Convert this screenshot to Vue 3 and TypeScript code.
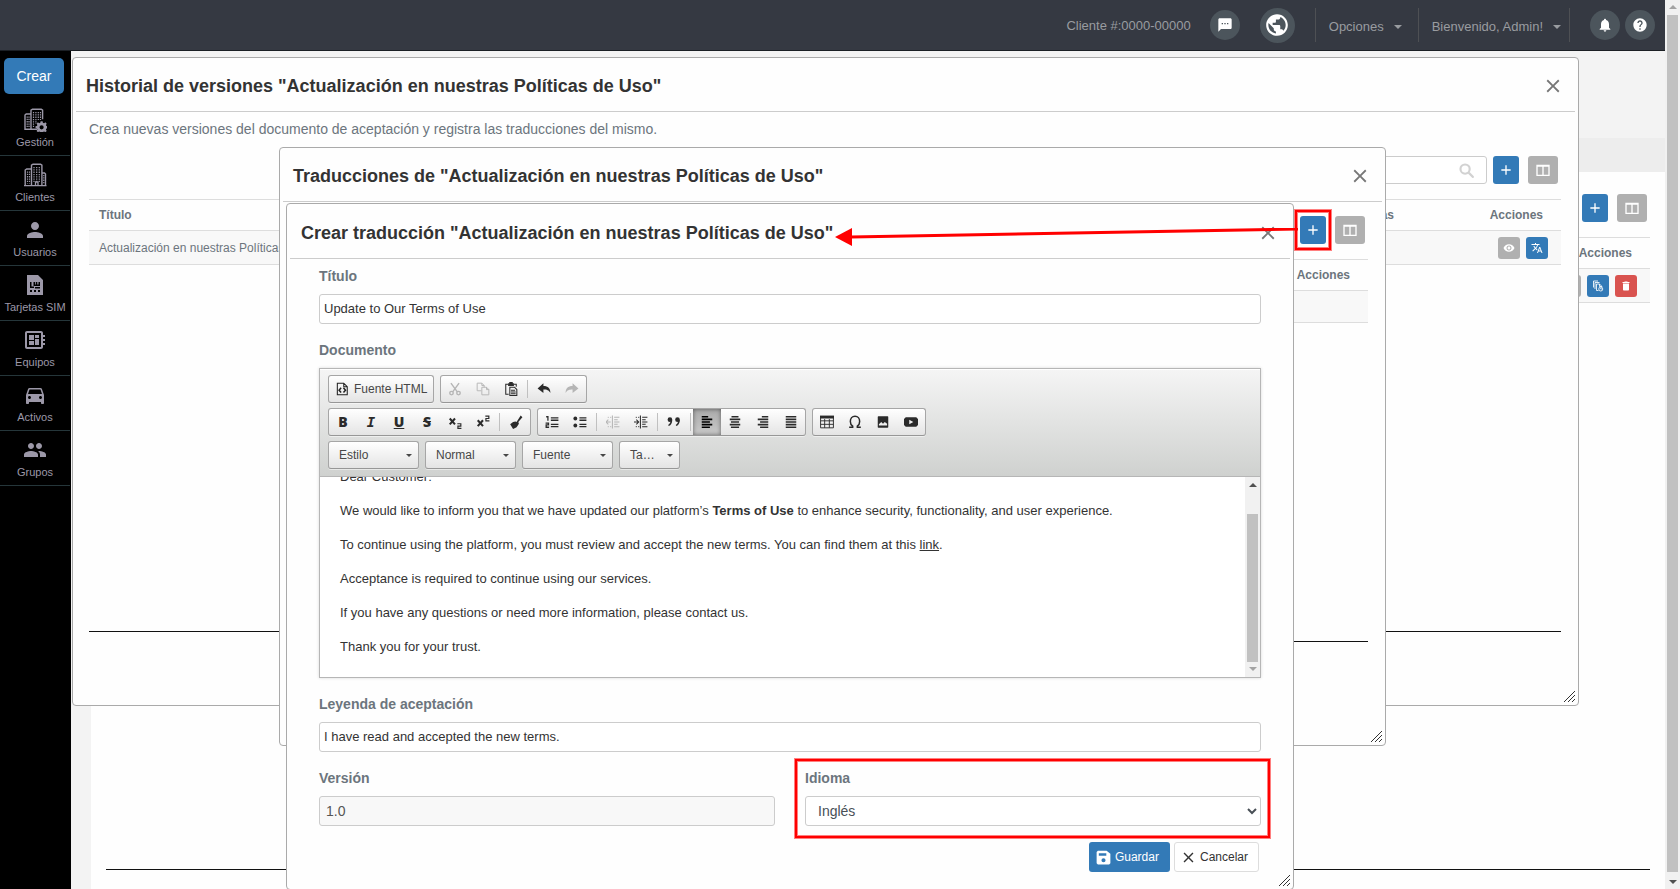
<script setup lang="ts">
import { h, ref, type FunctionalComponent } from 'vue'

interface MenuEntry {
  label: string
  icon: string
}

interface ToolButton {
  label: string
  icon: string
  disabled?: boolean
  active?: boolean
  separated?: boolean
}

const shapes: Record<string, string> = {
  person: '<path d="M12 12c2.21 0 4-1.79 4-4s-1.79-4-4-4-4 1.79-4 4 1.79 4 4 4zm0 2c-2.67 0-8 1.34-8 4v2h16v-2c0-2.66-5.33-4-8-4z"/>',
  people: '<path d="M16 11c1.66 0 2.99-1.34 2.99-3S17.66 5 16 5c-1.66 0-3 1.34-3 3s1.34 3 3 3zm-8 0c1.66 0 2.99-1.34 2.99-3S9.66 5 8 5C6.34 5 5 6.34 5 8s1.34 3 3 3zm0 2c-2.33 0-7 1.17-7 3.5V19h14v-2.5c0-2.33-4.67-3.5-7-3.5zm8 0c-.29 0-.62.02-.97.05 1.16.84 1.97 1.97 1.97 3.45V19h6v-2.5c0-2.33-4.67-3.5-7-3.5z"/>',
  car: '<path d="M18.92 6.01C18.72 5.42 18.16 5 17.5 5h-11c-.66 0-1.21.42-1.42 1.01L3 12v8c0 .55.45 1 1 1h1c.55 0 1-.45 1-1v-1h12v1c0 .55.45 1 1 1h1c.55 0 1-.45 1-1v-8l-2.08-5.99zM6.5 16c-.83 0-1.5-.67-1.5-1.5S5.67 13 6.5 13s1.5.67 1.5 1.5S7.33 16 6.5 16zm11 0c-.83 0-1.5-.67-1.5-1.5s.67-1.5 1.5-1.5 1.5.67 1.5 1.5-.67 1.5-1.5 1.5zM5 11l1.5-4.5h11L19 11H5z"/>',
  board: '<path fill-rule="evenodd" d="M22 9V7h-2V5c0-1.1-.9-2-2-2H4c-1.1 0-2 .9-2 2v14c0 1.1.9 2 2 2h14c1.1 0 2-.9 2-2v-2h2v-2h-2v-2h2v-2h-2V9h2zm-4 10H4V5h14v14z"/><path d="M6 13h5v4H6zM12 7h4v3h-4zM6 7h5v5H6zM12 11h4v6h-4z"/>',
  sim: '<path fill-rule="evenodd" d="M4 2h11l5 5v15H4zM7 9v6h4v-1.500H8.500V9zM10.500 9v4h6.500V9h-1.500v2.500h-1.200V9h-1.500v2.500h-.8V9zM12 14v1.500h5V14zM7 17v2h2v-2zM11 17v2h2v-2zM15 17v2h2v-2z"/>',
  buildingsGear: '<g fill="none" stroke="currentColor"><path stroke-width="1.400" d="M8 21.300V2.200l1.500-1h8.700l1.400 1v9M8 6H3.200L2 7v14.300h12"/><path stroke-width="1.200" stroke-dasharray="1.300 1" d="M10.500 4v15M12.900 4v12M15.300 4v8M17.500 4v8M4.200 8.500v11M6 8.500v11"/></g><path fill-rule="evenodd" d="M17.600 13.200h2l.3 1.500 1.200.5 1.300-.9 1.300 1.400-.8 1.300.5 1 1.500.3v2l-1.500.3-.5 1 .8 1.300-1.300 1.300-1.300-.8-1.200.5-.3 1.300h-2l-.3-1.300-1.100-.5-1.300.8-1.300-1.300.8-1.300-.5-1-1.400-.3v-2l1.400-.3.5-1-.8-1.300 1.300-1.400 1.300.9 1.100-.5zM18.600 17.200a2.100 2.100 0 100 4.200 2.100 2.100 0 000-4.200z"/>',
  buildings: '<g fill="none" stroke="currentColor"><path stroke-width="1.400" d="M8.500 22.300V2.200l1.500-1h7.500l1.400 1v20.100M8.500 6H3.700L2.200 7v15.300M19 10h2.500l1 1v11.300M1 22.600h22.500"/><path stroke-width="1.200" stroke-dasharray="1.300 1" d="M11 4v15M13.700 4v15M16.300 4v15M4.500 8.500v12M6.500 8.500v12M20.800 12v9"/><path stroke-width="1.300" d="M12.500 22v-3h2.500v3"/></g>',
  chat: '<path fill-rule="evenodd" d="M20 2H4c-1.100 0-1.990.9-1.990 2L2 22l4-4h14c1.100 0 2-.9 2-2V4c0-1.100-.9-2-2-2zM9 11H7V9h2v2zm4 0h-2V9h2v2zm4 0h-2V9h2v2z"/>',
  globe: '<path d="M12 2C6.480 2 2 6.480 2 12s4.480 10 10 10 10-4.480 10-10S17.520 2 12 2zm-1 17.930c-3.950-.49-7-3.850-7-7.930 0-.62.08-1.210.21-1.790L9 15v1c0 1.100.9 2 2 2v1.930zm6.900-2.540c-.26-.81-1-1.390-1.900-1.390h-1v-3c0-.55-.45-1-1-1H8v-2h2c.55 0 1-.45 1-1V7h2c1.100 0 2-.9 2-2v-.41c2.930 1.190 5 4.060 5 7.410 0 2.080-.8 3.970-2.100 5.390z"/>',
  bell: '<path d="M12 22c1.100 0 2-.9 2-2h-4c0 1.100.89 2 2 2zm6-6v-5c0-3.070-1.640-5.640-4.500-6.320V4c0-.83-.67-1.500-1.500-1.500s-1.500.67-1.500 1.500v.68C7.630 5.360 6 7.920 6 11v5l-2 2v1h16v-1l-2-2z"/>',
  help: '<path d="M12 2C6.480 2 2 6.480 2 12s4.480 10 10 10 10-4.480 10-10S17.520 2 12 2zm1 17h-2v-2h2v2zm2.070-7.750l-.9.920C13.450 12.900 13 13.500 13 15h-2v-.5c0-1.100.45-2.100 1.170-2.830l1.240-1.260c.37-.36.59-.86.59-1.410 0-1.100-.9-2-2-2s-2 .9-2 2H8c0-2.210 1.790-4 4-4s4 1.790 4 4c0 .88-.36 1.680-.93 2.250z"/>',
  close: '<path d="M19 6.410L17.590 5 12 10.590 6.410 5 5 6.410 10.590 12 5 17.590 6.410 19 12 13.410 17.590 19 19 17.590 13.410 12z"/>',
  plus: '<path d="M19 13h-6v6h-2v-6H5v-2h6V5h2v6h6v2z"/>',
  columns: '<path fill="none" stroke="currentColor" stroke-width="2" d="M3 5h18v15H3zM12 5v15M3 6h18"/>',
  search: '<path fill="none" stroke="currentColor" stroke-width="3" stroke-linecap="round" d="M10 3.500a6.500 6.500 0 100 13 6.500 6.500 0 000-13zM15 15l6 6"/>',
  eye: '<path d="M12 4.500C7 4.500 2.730 7.610 1 12c1.730 4.390 6 7.500 11 7.500s9.270-3.110 11-7.500c-1.730-4.390-6-7.500-11-7.500zM12 17c-2.760 0-5-2.240-5-5s2.240-5 5-5 5 2.240 5 5-2.240 5-5 5zm0-8c-1.660 0-3 1.340-3 3s1.340 3 3 3 3-1.340 3-3-1.340-3-3-3z"/>',
  translate: '<path d="M12.870 15.070l-2.540-2.510.03-.03c1.740-1.940 2.980-4.170 3.710-6.530H17V4h-7V2H8v2H1v1.990h11.170C11.500 7.920 10.440 9.750 9 11.350 8.070 10.320 7.300 9.190 6.690 8h-2c.73 1.630 1.730 3.170 2.980 4.560l-5.090 5.020L4 19l5-5 3.110 3.110.76-2.040zM18.500 10h-2L12 22h2l1.120-3h4.750L21 22h2l-4.500-12zm-2.620 7l1.620-4.330L19.120 17h-3.240z"/>',
  history: '<g fill="none" stroke="currentColor" stroke-width="1.700"><path d="M3 15V2h9M6 18V5h9M9 21V8h6l5 5M15 8v5h5M9 21h4"/><circle cx="17.500" cy="18" r="4"/><path d="M17.500 15.500V18h2"/></g>',
  trash: '<path d="M6 19c0 1.100.9 2 2 2h8c1.100 0 2-.9 2-2V7H6v12zM19 4h-3.500l-1-1h-5l-1 1H5v2h14V4z"/>',
  save: '<path fill-rule="evenodd" d="M3 1h14l6 5v15l-2 2H3l-2-2V3zM4.500 5v4h12V5zM12 13a3.300 3.300 0 100 6.600A3.300 3.300 0 0012 13z"/>',
  source: '<path fill="none" stroke="currentColor" stroke-width="1.800" d="M4 2h11l6 6v14H4zM15 2v6h6"/><path fill="none" stroke="currentColor" stroke-width="2.600" d="M10.500 10l-3.500 4 3.500 4M14.500 10l3.500 4-3.500 4"/>',
  cut: '<g fill="none" stroke="currentColor" stroke-width="2.400"><path d="M5 2l11 15M19 2L8 17"/><circle cx="6" cy="19" r="3"/><circle cx="18" cy="19" r="3"/></g>',
  copy: '<path fill="none" stroke="currentColor" stroke-width="1.600" d="M9 15H2V2h8l4 4v3M10 2v4h4M10 9h8l4 4v9H10zM18 9v4h4"/>',
  paste: '<path fill="none" stroke="currentColor" stroke-width="1.800" d="M8 21H3V4h4M17 4h4v4M10 9h8l4 4v10H10zM12 14h7M12 17h8M12 20h8"/><path d="M7 2h2V0h6v2h2v5H7z"/>',
  undo: '<path d="M1 11l10-9v5c8 0 12 4 12 12-3-5-6-6-12-6v6z"/>',
  redo: '<path d="M23 11L13 2v5C5 7 1 11 1 19c3-5 6-6 12-6v6z"/>',
  sub: '<path fill="none" stroke="currentColor" stroke-width="3.500" d="M3 6l9 10M12 6L3 16"/><path fill="none" stroke="currentColor" stroke-width="2" d="M16 15h6v4h-5v4h6"/>',
  sup: '<path fill="none" stroke="currentColor" stroke-width="3.500" d="M3 9l9 10M12 9L3 19"/><path fill="none" stroke="currentColor" stroke-width="2" d="M16 2h6v4h-5v4h6"/>',
  brush: '<path d="M20 1l3 3-7 8 1 3-4 6-6 3-5-8 5-4 4-1 2 1z"/>',
  numbered: '<path fill="none" stroke="currentColor" stroke-width="2.200" d="M2 3h3v7M1 14h5v3H2v4h5M10 5h13M10 9h13M10 16h13M10 20h13"/>',
  bulleted: '<path fill="none" stroke="currentColor" stroke-width="2.200" d="M11 5h12M11 9h12M11 16h12M11 20h12"/><circle cx="4" cy="6" r="3.300"/><circle cx="4" cy="18" r="3.300"/>',
  outdent: '<path fill="none" stroke="currentColor" stroke-width="1.800" d="M11 1v22M14 4h9M14 8h6M14 12h9M14 16h6M14 20h9M0 12h8M4 8l-4 4 4 4"/><path fill="none" stroke="currentColor" stroke-width="1.500" stroke-dasharray="2 2" d="M3 4h6M3 20h6"/>',
  indent: '<path fill="none" stroke="currentColor" stroke-width="1.800" d="M11 1v22M14 4h9M14 8h6M14 12h9M14 16h6M14 20h9M0 12h8M4 8l4 4-4 4"/><path fill="none" stroke="currentColor" stroke-width="1.500" stroke-dasharray="2 2" d="M3 4h6M3 20h6"/>',
  quote: '<circle cx="5" cy="8" r="4"/><path d="M9 8c0 6-2 9-6 11l-1-2c3-2 4-4 4-7z"/><circle cx="18" cy="8" r="4"/><path d="M22 8c0 6-2 9-6 11l-1-2c3-2 4-4 4-7z"/>',
  alignLeft: '<path fill="none" stroke="currentColor" stroke-width="2.600" d="M3 3h11M3 7.500h18M3 12h14M3 16.500h18M3 21h14"/>',
  alignCenter: '<path fill="none" stroke="currentColor" stroke-width="2.600" d="M6 3h12M3 7.500h18M5 12h14M3 16.500h18M5 21h14"/>',
  alignRight: '<path fill="none" stroke="currentColor" stroke-width="2.600" d="M10 3h11M3 7.500h18M7 12h14M3 16.500h18M7 21h14"/>',
  justify: '<path fill="none" stroke="currentColor" stroke-width="2.600" d="M3 3h18M3 7.500h18M3 12h18M3 16.500h18M3 21h18"/>',
  table: '<path fill="none" stroke="currentColor" stroke-width="1.600" d="M1 3h22v19H1zM1 10h22M1 16h22M8 7v15M16 7v15"/><path d="M0 1h24v5H0z"/>',
  omega: '<path fill="none" stroke="currentColor" stroke-width="2.600" d="M2 21h6v-2C5 17 4 14 4 11c0-5 3-9 8-9s8 4 8 9c0 3-1 6-4 8v2h6"/>',
  image: '<path fill-rule="evenodd" d="M4 2h16l1 1v18l-1 1H4l-1-1V3zM5 18h14v-3l-4-3-3 3-3-3-4 4z"/>',
  video: '<path fill-rule="evenodd" d="M3 4h18l3 3v10l-3 3H3l-3-3V7zM9 8v8l7-4z"/>',
}

const letters: Record<string, string> = { bold: 'B', italic: 'I', underline: 'U', strike: 'S' }

const Icon: FunctionalComponent<{ name: string }> = (props) =>
  h('svg', { viewBox: '0 0 24 24', fill: 'currentColor', 'aria-hidden': 'true', innerHTML: shapes[props.name] })
Icon.props = ['name']

const menu: MenuEntry[] = [
  { label: 'Gestión', icon: 'buildingsGear' },
  { label: 'Clientes', icon: 'buildings' },
  { label: 'Usuarios', icon: 'person' },
  { label: 'Tarjetas SIM', icon: 'sim' },
  { label: 'Equipos', icon: 'board' },
  { label: 'Activos', icon: 'car' },
  { label: 'Grupos', icon: 'people' },
]

const clipboardTools: ToolButton[] = [
  { label: 'Cortar', icon: 'cut', disabled: true },
  { label: 'Copiar', icon: 'copy', disabled: true },
  { label: 'Pegar', icon: 'paste' },
  { label: 'Deshacer', icon: 'undo', separated: true },
  { label: 'Rehacer', icon: 'redo', disabled: true },
]

const formatRow: ToolButton[][] = [
  [
    { label: 'Negrita', icon: 'bold' },
    { label: 'Cursiva', icon: 'italic' },
    { label: 'Subrayado', icon: 'underline' },
    { label: 'Tachado', icon: 'strike' },
    { label: 'Subíndice', icon: 'sub' },
    { label: 'Superíndice', icon: 'sup' },
    { label: 'Eliminar formato', icon: 'brush', separated: true },
  ],
  [
    { label: 'Lista numerada', icon: 'numbered' },
    { label: 'Lista con viñetas', icon: 'bulleted' },
    { label: 'Disminuir sangría', icon: 'outdent', disabled: true, separated: true },
    { label: 'Aumentar sangría', icon: 'indent' },
    { label: 'Cita', icon: 'quote', separated: true },
    { label: 'Alinear a la izquierda', icon: 'alignLeft', active: true, separated: true },
    { label: 'Centrar', icon: 'alignCenter' },
    { label: 'Alinear a la derecha', icon: 'alignRight' },
    { label: 'Justificar', icon: 'justify' },
  ],
  [
    { label: 'Tabla', icon: 'table' },
    { label: 'Carácter especial', icon: 'omega' },
    { label: 'Imagen', icon: 'image' },
    { label: 'Vídeo', icon: 'video' },
  ],
]

const combos = [
  { label: 'Estilo', small: false },
  { label: 'Normal', small: false },
  { label: 'Fuente', small: false },
  { label: 'Ta…', small: true },
]

const documentName = 'Actualización en nuestras Políticas de Uso'
const titulo = ref('Update to Our Terms of Use')
const leyenda = ref('I have read and accepted the new terms.')
const idioma = ref('Inglés')
</script>

<template>
  <div class="page">
    <div class="app">
      <header class="topbar">
        <span class="client">Cliente #:0000-00000</span>
        <button class="round" aria-label="Mensajes"><Icon name="chat" /></button>
        <button class="round round-large" aria-label="Idioma del sitio"><Icon name="globe" /></button>
        <button class="drop">Opciones<i class="caret"></i></button>
        <button class="drop drop-last">Bienvenido, Admin!<i class="caret"></i></button>
        <button class="round" aria-label="Notificaciones"><Icon name="bell" /></button>
        <button class="round" aria-label="Ayuda"><Icon name="help" /></button>
      </header>
      <div class="columns">
        <nav class="sidebar">
          <button class="create">Crear</button>
          <a v-for="m in menu" :key="m.label" href="#" class="entry">
            <Icon :name="m.icon" />
            <span>{{ m.label }}</span>
          </a>
        </nav>
        <main class="main">
          <div class="crumbs"></div>
          <section class="panel">
            <div class="tools">
              <button class="add" aria-label="Agregar"><Icon name="plus" /></button>
              <button class="cols" aria-label="Columnas"><Icon name="columns" /></button>
            </div>
            <div class="grid grid-page">
              <table>
                <thead><tr><th></th><th class="actions">Acciones</th></tr></thead>
                <tbody>
                  <tr>
                    <td></td>
                    <td class="actions">
                      <div class="row-actions">
                        <button class="mini gray" aria-label="Ver"><Icon name="eye" /></button>
                        <button class="mini" aria-label="Versiones"><Icon name="history" /></button>
                        <button class="mini red" aria-label="Eliminar"><Icon name="trash" /></button>
                      </div>
                    </td>
                  </tr>
                </tbody>
              </table>
            </div>
          </section>
        </main>
      </div>
    </div>

    <div class="page-scroll" aria-hidden="true">
      <i class="up faint"></i><div class="thumb"></div><i class="down"></i>
    </div>

    <section class="window window-history" role="dialog" aria-labelledby="t1">
      <div class="titlebar">
        <h2 id="t1">Historial de versiones "{{ documentName }}"</h2>
        <button class="close" aria-label="Cerrar"><Icon name="close" /></button>
      </div>
      <div class="body">
        <p class="intro">Crea nuevas versiones del documento de aceptación y registra las traducciones del mismo.</p>
        <div class="tools">
          <div class="search"><input type="search" aria-label="Buscar" /><Icon name="search" /></div>
          <button class="add" aria-label="Agregar versión"><Icon name="plus" /></button>
          <button class="cols" aria-label="Columnas"><Icon name="columns" /></button>
        </div>
        <div class="grid grid-history">
          <table>
            <thead><tr><th>Título</th><th class="end">as</th><th class="actions">Acciones</th></tr></thead>
            <tbody>
              <tr>
                <td>{{ documentName }}</td>
                <td></td>
                <td class="actions">
                  <div class="row-actions">
                    <button class="mini gray" aria-label="Ver"><Icon name="eye" /></button>
                    <button class="mini" aria-label="Traducciones"><Icon name="translate" /></button>
                  </div>
                </td>
              </tr>
            </tbody>
          </table>
        </div>
      </div>
      <svg class="grip" viewBox="0 0 12 12"><path d="M1 12L12 1M5 12l7-7M9 12l3-3" /></svg>
    </section>

    <section class="window window-list" role="dialog" aria-labelledby="t2">
      <div class="titlebar">
        <h2 id="t2">Traducciones de "{{ documentName }}"</h2>
        <button class="close" aria-label="Cerrar"><Icon name="close" /></button>
      </div>
      <div class="body">
        <div class="tools">
          <button class="add marked" aria-label="Agregar traducción"><Icon name="plus" /></button>
          <button class="cols" aria-label="Columnas"><Icon name="columns" /></button>
        </div>
        <div class="grid grid-list">
          <table>
            <thead><tr><th></th><th class="actions">Acciones</th></tr></thead>
            <tbody><tr><td></td><td></td></tr></tbody>
          </table>
        </div>
      </div>
      <svg class="grip" viewBox="0 0 12 12"><path d="M1 12L12 1M5 12l7-7M9 12l3-3" /></svg>
    </section>

    <section class="window window-form" role="dialog" aria-labelledby="t3">
      <div class="titlebar">
        <h2 id="t3">Crear traducción "{{ documentName }}"</h2>
        <button class="close" aria-label="Cerrar"><Icon name="close" /></button>
      </div>
      <form class="form" @submit.prevent>
        <div class="field">
          <label for="titulo">Título</label>
          <input id="titulo" v-model="titulo" type="text" />
        </div>
        <div class="field">
          <label id="documento">Documento</label>
          <div class="editor">
            <div class="toolbar">
              <div class="tool-row">
                <div class="group">
                  <button type="button" class="source"><Icon name="source" />Fuente HTML</button>
                </div>
                <div class="group">
                  <button
                    v-for="t in clipboardTools"
                    :key="t.icon"
                    type="button"
                    class="tool"
                    :class="{ separated: t.separated }"
                    :disabled="t.disabled"
                    :aria-label="t.label"
                  >
                    <Icon :name="t.icon" />
                  </button>
                </div>
              </div>
              <div class="tool-row">
                <div v-for="(g, i) in formatRow" :key="i" class="group">
                  <button
                    v-for="t in g"
                    :key="t.icon"
                    type="button"
                    class="tool"
                    :class="{ separated: t.separated, active: t.active }"
                    :disabled="t.disabled"
                    :aria-label="t.label"
                  >
                    <span v-if="letters[t.icon]" class="letter" :class="t.icon">{{ letters[t.icon] }}</span>
                    <Icon v-else :name="t.icon" />
                  </button>
                </div>
              </div>
              <div class="tool-row">
                <button v-for="c in combos" :key="c.label" type="button" class="group combo" :class="{ small: c.small }">
                  {{ c.label }}<i class="caret"></i>
                </button>
              </div>
            </div>
            <div class="sheet">
              <div class="text" contenteditable="true" role="textbox" aria-labelledby="documento" spellcheck="false">
                <p>Dear Customer:</p>
                <p>We would like to inform you that we have updated our platform’s <b>Terms of Use</b> to enhance security, functionality, and user experience.</p>
                <p>To continue using the platform, you must review and accept the new terms. You can find them at this <a href="#">link</a>.</p>
                <p>Acceptance is required to continue using our services.</p>
                <p>If you have any questions or need more information, please contact us.</p>
                <p>Thank you for your trust.</p>
              </div>
              <div class="sheet-scroll" aria-hidden="true">
                <i class="up"></i><div class="thumb"></div><i class="down faint"></i>
              </div>
            </div>
          </div>
        </div>
        <div class="field">
          <label for="leyenda">Leyenda de aceptación</label>
          <input id="leyenda" v-model="leyenda" type="text" />
        </div>
        <div class="pair">
          <div class="field">
            <label for="version">Versión</label>
            <input id="version" class="locked" type="text" value="1.0" readonly />
          </div>
          <div class="field framed">
            <label for="idioma">Idioma</label>
            <select id="idioma" v-model="idioma"><option>Inglés</option></select>
          </div>
        </div>
        <div class="buttons">
          <button type="submit" class="save"><Icon name="save" />Guardar</button>
          <button type="button" class="cancel"><Icon name="close" />Cancelar</button>
        </div>
      </form>
      <svg class="arrow" viewBox="0 0 463 18" aria-hidden="true">
        <path d="M16 9L463 1" stroke="#f00" stroke-width="3" /><path d="M0 9L17 0v18z" fill="#f00" />
      </svg>
      <svg class="grip" viewBox="0 0 12 12"><path d="M1 12L12 1M5 12l7-7M9 12l3-3" /></svg>
    </section>
  </div>
</template>

<style>
body {
  margin: 0;
}
</style>

<style scoped>
.page {
  position: relative;
  display: flex;
  height: 100vh;
  overflow: hidden;
  background: #f3f3f3;
  font-family: "Liberation Sans", Arial, sans-serif;
  font-size: 13px;
  color: #333;
}
.page * {
  box-sizing: border-box;
}
button,
input,
select {
  font-family: inherit;
  margin: 0;
}
button {
  padding: 0;
  border: 0;
  background: none;
  cursor: pointer;
}
svg {
  display: block;
  flex: none;
}
.app {
  display: flex;
  flex-direction: column;
  flex: 1;
  min-width: 0;
}
.topbar {
  display: flex;
  align-items: center;
  justify-content: flex-end;
  flex: none;
  height: 51px;
  padding-right: 10px;
  background: #353942;
  border-bottom: 1px solid #1b1f24;
  color: #999ca0;
}
.client {
  margin-right: 19px;
}
.round {
  display: grid;
  place-items: center;
  width: 30px;
  height: 30px;
  border-radius: 50%;
  background: #4c555c;
  color: #fff;
}
.round svg {
  width: 16px;
  height: 16px;
}
.round + .round {
  margin-left: 5px;
}
.round + .round-large {
  width: 35px;
  height: 35px;
  margin: 0 20px;
}
.round-large svg {
  width: 26px;
  height: 26px;
}
.drop {
  display: flex;
  align-items: center;
  height: 34px;
  padding: 3px 16px 0 13px;
  border-left: 1px solid #4e5054;
  color: #999ca0;
  font-size: 13px;
}
.drop-last {
  padding-right: 8px;
  margin-right: 20px;
  border-right: 1px solid #4e5054;
}
.caret {
  margin-left: 10px;
  border: 4px solid transparent;
  border-top-color: currentColor;
  border-bottom: 0;
}
.columns {
  display: flex;
  flex: 1;
  min-height: 0;
}
.sidebar {
  flex: none;
  width: 71px;
  padding: 7px 1px 0 0;
  background: #000;
}
.create {
  display: block;
  width: 60px;
  height: 36px;
  margin: 0 0 7px 4px;
  border-radius: 5px;
  background: #337ab7;
  color: #fff;
  font-size: 14px;
}
.entry {
  display: flex;
  flex-direction: column;
  align-items: center;
  height: 55px;
  padding-top: 7px;
  border-bottom: 1px solid #25363a;
  color: #9c98a8;
  font-size: 11px;
  line-height: 14px;
  text-decoration: none;
  white-space: nowrap;
}
.entry svg {
  width: 24px;
  height: 24px;
  margin-bottom: 3px;
}
.main {
  display: flex;
  flex-direction: column;
  flex: 1;
  min-width: 0;
  padding: 87px 0 0;
}
.crumbs {
  flex: none;
  height: 34px;
  background: #ededed;
}
.panel {
  flex: 1;
  margin-left: 20px;
  padding: 22px 15px 0;
  background: #fefefe;
}
.tools {
  display: flex;
  justify-content: flex-end;
  height: 28px;
  margin-bottom: 15px;
  padding-right: 3px;
}
.add,
.cols {
  display: grid;
  place-items: center;
  width: 26px;
  height: 28px;
  border-radius: 3px;
  background: #337ab7;
  color: #fff;
}
.cols {
  width: 30px;
  margin-left: 9px;
  background: #b0b0b0;
}
.add svg,
.cols svg {
  width: 16px;
  height: 16px;
}
.marked {
  position: relative;
}
.marked::after,
.framed::after {
  content: "";
  position: absolute;
  inset: -6px -5px;
  border: 2px solid #f00;
  box-shadow: 0 0 0 1px rgba(255, 0, 0, 0.5), inset 0 0 0 1px rgba(255, 0, 0, 0.5);
  pointer-events: none;
}
.search {
  position: relative;
  width: 240px;
  margin-right: 6px;
}
.search input {
  width: 100%;
  height: 28px;
  border: 1px solid #ccc;
  border-radius: 3px;
  background: #fff;
}
.search svg {
  position: absolute;
  top: 6px;
  right: 12px;
  width: 17px;
  height: 17px;
  color: #d2d2d2;
}
.grid {
  border-bottom: 1px solid #111;
}
.grid-page {
  height: 633px;
}
.grid-history {
  height: 433px;
  margin-bottom: 70px;
}
.grid-list {
  height: 383px;
  margin-bottom: 100px;
}
table {
  width: 100%;
  border-collapse: separate;
  border-spacing: 0;
  table-layout: fixed;
  font-size: 12px;
  color: #6c757d;
}
th {
  height: 31px;
  padding: 0 10px;
  border-top: 1px solid #ddd;
  text-align: left;
}
td {
  height: 35px;
  padding: 0 10px;
  border: 1px solid #ddd;
  border-width: 1px 0;
  background: #f8f8f8;
}
.grid-list td {
  height: 33px;
}
th.end {
  padding-right: 17px;
  text-align: right;
}
.actions {
  width: 150px;
  padding-right: 13px;
}
th.actions {
  padding-right: 18px;
  text-align: right;
}
.row-actions {
  display: flex;
  justify-content: flex-end;
  gap: 6px;
}
.mini {
  display: grid;
  place-items: center;
  width: 22px;
  height: 22px;
  border-radius: 3px;
  background: #337ab7;
  color: #fff;
}
.mini svg {
  width: 12px;
  height: 12px;
}
.gray {
  background: #b0b0b0;
}
.red {
  background: #d9534f;
}
.page-scroll,
.sheet-scroll {
  display: flex;
  flex-direction: column;
  align-items: center;
  flex: none;
  width: 15px;
  background: #f1f1f1;
}
.thumb {
  width: 11px;
  background: #c1c1c1;
}
.page-scroll {
  padding: 5px 0;
  gap: 6px;
}
.page-scroll .thumb {
  flex: 1;
}
.page-scroll .down {
  margin-top: 2px;
}
.sheet-scroll {
  padding: 6px 0;
}
.sheet-scroll .thumb {
  height: 148px;
  margin-top: auto;
  margin-bottom: 5px;
}
.up,
.down {
  border: 4px solid transparent;
}
.up {
  border-top: 0;
  border-bottom-color: #505050;
}
.down {
  border-bottom: 0;
  border-top-color: #505050;
}
.up.faint {
  border-bottom-color: #a3a3a3;
}
.down.faint {
  border-top-color: #a3a3a3;
}
.window {
  position: absolute;
  padding: 3px;
  border: 1px solid #aaa;
  border-radius: 4px;
  background: #fefefe;
}
.window-history {
  top: 57px;
  left: 72px;
  right: 101px;
}
.window-list {
  top: 147px;
  left: 279px;
  right: 294px;
}
.window-form {
  top: 203px;
  left: 286px;
  right: 386px;
}
.titlebar {
  display: flex;
  align-items: center;
  justify-content: space-between;
  height: 51px;
  padding: 0 10px;
  border-bottom: 1px solid #ccc;
}
.window-form .titlebar {
  height: 52px;
  padding-left: 11px;
}
.titlebar h2 {
  margin: 0;
  font-size: 18px;
  line-height: 24px;
}
.close {
  display: grid;
  place-items: center;
  width: 24px;
  height: 24px;
  color: #777;
}
.close svg {
  width: 22px;
  height: 22px;
}
.body {
  padding: 7px 14px 0 13px;
}
.window-list .body {
  padding-top: 14px;
}
.intro {
  margin: 0 0 17px;
  font-size: 14px;
  line-height: 20px;
  color: #6c757d;
}
.grip {
  position: absolute;
  right: 3px;
  bottom: 3px;
  width: 12px;
  height: 12px;
  fill: none;
  stroke: #333;
}
.form {
  display: flex;
  flex-direction: column;
  gap: 16px;
  padding: 7px 29px 14px;
}
.field {
  display: flex;
  flex-direction: column;
  gap: 8px;
}
.field label {
  font-size: 14px;
  font-weight: bold;
  line-height: 20px;
  color: #6c757d;
}
.field input,
.field select {
  width: 100%;
  height: 30px;
  padding: 0 4px 1px;
  border: 1px solid #ccc;
  border-radius: 3px;
  background-color: #fff;
  color: #333;
  font-size: 13px;
}
.field select {
  padding: 0 0 0 8px;
  color: #495057;
  font-size: 14px;
}
.field input.locked {
  padding: 0 6px;
  background: #f8f8f8;
  color: #555;
  font-size: 14px;
}
.pair {
  display: grid;
  grid-template-columns: 1fr 1fr;
  gap: 30px;
}
.framed {
  position: relative;
}
.framed::after {
  inset: -9px -9px -12px -10px;
}
.buttons {
  display: flex;
  justify-content: flex-end;
  gap: 4px;
  padding-right: 2px;
}
.save,
.cancel {
  display: flex;
  align-items: center;
  height: 30px;
  padding: 0 11px 0 7px;
  border-radius: 3px;
  background: #337ab7;
  color: #fff;
  font-size: 12px;
}
.save svg {
  width: 15px;
  height: 15px;
  margin-right: 4px;
}
.cancel {
  padding: 0 10px 0 5px;
  border: 1px solid #ddd;
  background: #fff;
  color: #333;
}
.cancel svg {
  width: 17px;
  height: 17px;
  margin-right: 3px;
}
.arrow {
  position: absolute;
  top: 24px;
  right: -5px;
  width: 463px;
  height: 18px;
  pointer-events: none;
}
.editor {
  border: 1px solid #b6b6b6;
  box-shadow: 0 0 3px rgba(0, 0, 0, 0.15);
}
.toolbar {
  display: flex;
  flex-direction: column;
  gap: 5px;
  padding: 6px 8px 7px;
  border-bottom: 1px solid #b6b6b6;
  background: linear-gradient(#f5f5f5, #cfd1cf);
  box-shadow: inset 0 1px 0 #fff;
}
.tool-row {
  display: flex;
  gap: 6px;
}
.group {
  display: flex;
  height: 28px;
  border: 1px solid #a6a6a6;
  border-bottom-color: #979797;
  border-radius: 3px;
  background: linear-gradient(#fff, #e4e4e4);
  box-shadow: 0 1px 0 rgba(255, 255, 255, 0.5);
}
.tool {
  position: relative;
  display: grid;
  place-items: center;
  width: 28px;
  height: 26px;
  color: #2b2b2b;
}
.tool svg,
.source svg {
  width: 14px;
  height: 14px;
}
.letter {
  font: 800 14px/18px "Open Sans", sans-serif;
}
.italic {
  font: italic 700 14px/18px "DejaVu Sans Mono", monospace;
}
.underline {
  text-decoration: underline;
}
.strike {
  text-decoration: line-through;
}
.tool:disabled {
  color: #b5b5b5;
}
.separated {
  margin-left: 5px;
}
.separated::before {
  content: "";
  position: absolute;
  top: 4px;
  left: -3px;
  width: 1px;
  height: 18px;
  background: #c0c0c0;
}
.active {
  background: linear-gradient(#aaa, #cacaca);
  box-shadow: inset 0 0 4px rgba(0, 0, 0, 0.5);
  color: #000;
}
.source {
  display: flex;
  align-items: center;
  gap: 5px;
  padding: 0 6px;
  color: #474747;
  font-size: 12px;
}
.source svg {
  color: #222;
}
.combo {
  align-items: center;
  justify-content: space-between;
  width: 91px;
  padding: 0 6px 0 10px;
  color: #474747;
  font-size: 12px;
}
.combo .caret {
  border-width: 3px 3px 0;
}
.combo.small {
  width: 61px;
}
.sheet {
  display: flex;
  height: 200px;
  background: #fff;
}
.text {
  display: flex;
  flex-direction: column;
  justify-content: flex-end;
  gap: 13px;
  flex: 1;
  min-width: 0;
  padding: 0 20px;
  overflow: hidden;
  line-height: 21px;
  outline: none;
}
.text p {
  margin: 0;
}
.text p:last-child {
  margin-bottom: 20px;
}
.text a {
  color: inherit;
}
</style>
